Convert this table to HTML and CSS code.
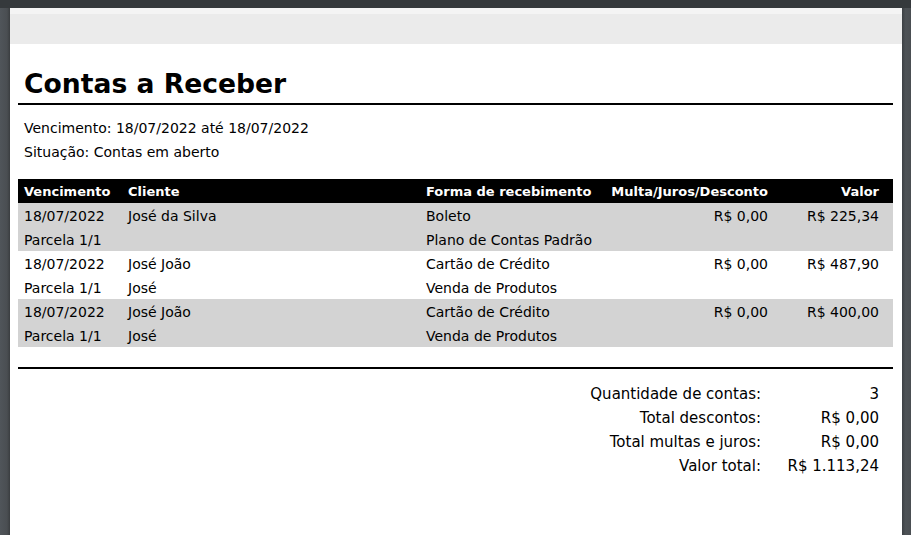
FILE: index.html
```html
<!DOCTYPE html>
<html lang="pt-BR">
<head>
<meta charset="utf-8">
<title>Contas a Receber</title>
<link rel="stylesheet" href="styles.css">
</head>
<body>
<div class="viewer">
  <div class="topbar"></div>
  <div class="stage">
    <div class="edge-left"></div>
    <div class="page">
      <div class="band"></div>
      <div class="content">
        <h1 class="title">Contas a Receber</h1>
        <div class="filters">
          <p>Vencimento: 18/07/2022 até 18/07/2022</p>
          <p>Situação: Contas em aberto</p>
        </div>
        <table class="grid">
          <colgroup>
            <col class="c1"><col class="c2"><col class="c3"><col class="c4"><col class="c5">
          </colgroup>
          <thead>
            <tr>
              <th>Vencimento</th>
              <th>Cliente</th>
              <th>Forma de recebimento</th>
              <th class="num">Multa/Juros/Desconto</th>
              <th class="num last">Valor</th>
            </tr>
          </thead>
          <tbody class="shade">
            <tr><td>18/07/2022</td><td>José da Silva</td><td>Boleto</td><td class="num">R$ 0,00</td><td class="num last">R$ 225,34</td></tr>
            <tr><td>Parcela 1/1</td><td></td><td>Plano de Contas Padrão</td><td></td><td class="last"></td></tr>
          </tbody>
          <tbody>
            <tr><td>18/07/2022</td><td>José João</td><td>Cartão de Crédito</td><td class="num">R$ 0,00</td><td class="num last">R$ 487,90</td></tr>
            <tr><td>Parcela 1/1</td><td>José</td><td>Venda de Produtos</td><td></td><td class="last"></td></tr>
          </tbody>
          <tbody class="shade">
            <tr><td>18/07/2022</td><td>José João</td><td>Cartão de Crédito</td><td class="num">R$ 0,00</td><td class="num last">R$ 400,00</td></tr>
            <tr><td>Parcela 1/1</td><td>José</td><td>Venda de Produtos</td><td></td><td class="last"></td></tr>
          </tbody>
        </table>
        <div class="rule"></div>
        <div class="summary">
          <span class="lbl">Quantidade de contas:</span><span class="val">3</span>
          <span class="lbl">Total descontos:</span><span class="val">R$ 0,00</span>
          <span class="lbl">Total multas e juros:</span><span class="val">R$ 0,00</span>
          <span class="lbl">Valor total:</span><span class="val">R$ 1.113,24</span>
        </div>
      </div>
    </div>
    <div class="edge-right"></div>
  </div>
</div>
</body>
</html>
```

FILE: styles.css
```css
* { box-sizing: border-box; }
html, body { margin: 0; padding: 0; }
body {
  width: 911px;
  height: 535px;
  overflow: hidden;
  background: #3a3e42;
  font-family: "DejaVu Sans", Verdana, sans-serif;
  color: #000;
}
.viewer { display: flex; flex-direction: column; height: 535px; }
.topbar { height: 8px; background: #35393c; flex: none; }
.stage { display: flex; flex: 1; }
.edge-left {
  width: 10px;
  background: linear-gradient(to right, #50555a, #4a4e52 70%, #3a3d40);
}
.edge-right {
  width: 9px;
  background: linear-gradient(to right, #3c4044, #4d5256 40%, #4a4e52);
}
.page { width: 892px; background: #fff; }
.band {
  height: 36px;
  background: linear-gradient(to bottom, #f4f4f4 0, #f4f4f4 6px, #ebebeb 6px);
}
.content { padding: 0 9px 0 8px; }
.title {
  margin: 0;
  padding: 23px 0 2px 6px;
  font-size: 26.6px;
  font-weight: bold;
  line-height: 34px;
  border-bottom: 2px solid #000;
}
.filters { padding: 11px 0 0 6px; font-size: 14px; line-height: 24px; }
.filters p { margin: 0; }
.grid {
  margin-top: 15px;
  width: 875px;
  border-collapse: collapse;
  table-layout: fixed;
  font-size: 14px;
}
.c1 { width: 104px; }
.c2 { width: 298px; }
.c3 { width: 178px; }
.c4 { width: 176px; }
.c5 { width: 119px; }
.grid th, .grid td {
  padding: 0 6px;
  text-align: left;
  white-space: nowrap;
}
.grid th {
  background: #000;
  color: #fff;
  font-weight: bold;
  font-size: 13px;
  height: 24px;
}
.grid td { height: 24px; padding-top: 2px; }
.grid .num { text-align: right; }
.grid .last { padding-right: 14px; }
.shade td { background: #d3d3d3; }
.rule { margin-top: 20px; height: 2px; background: #000; }
.summary {
  display: grid;
  grid-template-columns: auto 118px;
  justify-content: end;
  padding: 13px 14px 0 0;
  font-size: 15px;
  line-height: 24px;
  text-align: right;
}
```
